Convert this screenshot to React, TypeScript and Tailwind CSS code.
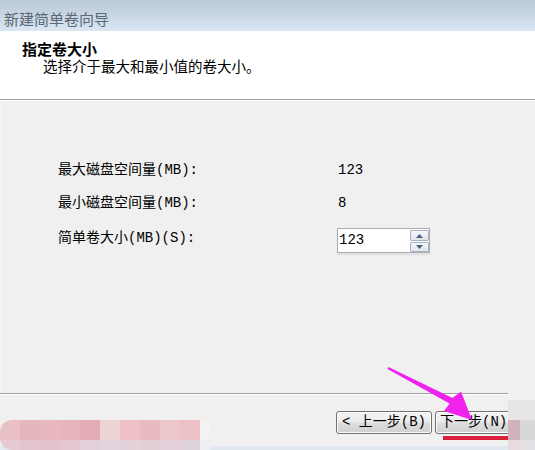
import React from "react";

const cjk = { fontFamily: "'Noto Sans CJK SC', sans-serif" };
const mono = { fontFamily: "'Liberation Mono', 'Noto Sans CJK SC', monospace" };

function Spin() {
  return (
    <div className="w-[93px] h-[25px] border border-[#abadb3] bg-white flex shadow-[0_2px_1px_#e2e2e2]">
      <div className="flex-1 flex items-center pl-[1px] text-[14px] text-black" style={mono}>
        123
      </div>
      <div className="w-[19px] flex flex-col gap-[1px] pt-[1px] pb-[0px]">
        <div className="h-[11px] border border-[#a9b2c2] rounded-[1px] bg-[linear-gradient(to_bottom,#f6f8fb,#dfe4ec)] flex items-center justify-center">
          <svg width="7" height="4" viewBox="0 0 7 4">
            <polygon points="3.5,0 7,4 0,4" fill="#4d5f80" />
          </svg>
        </div>
        <div className="h-[10px] border border-[#a9b2c2] rounded-[1px] bg-[linear-gradient(to_bottom,#f6f8fb,#dfe4ec)] flex items-center justify-center">
          <svg width="7" height="4" viewBox="0 0 7 4">
            <polygon points="0,0 7,0 3.5,4" fill="#4d5f80" />
          </svg>
        </div>
      </div>
    </div>
  );
}

const btn =
  "h-[23px] border border-[#707070] rounded-[3px] bg-[linear-gradient(to_bottom,#f3f3f3_0%,#ebebeb_48%,#dddddd_52%,#d1d1d1_100%)] shadow-[inset_0_0_0_1px_#fbfbfb] flex items-center text-[14px] text-black";

export default function App() {
  const mosaicRow1 = ["#e8c0c6", "#e6b6bd", "#e8b8be", "#e6b4bb", "#e4adb5", "#ecd4d6", "#ecc0c6", "#e8bac1", "#ecc6ca", "#ecc0c5"];
  const mosaicRow2 = ["#e6cad2", "#e4c4cc", "#e2c2cc", "#e4c6d0", "#e4d0dc", "#e2d4dc", "#e4d2da", "#e2d0d8", "#e4d0da", "#e0d4dc"];
  return (
    <div className="relative w-[535px] h-[450px] overflow-hidden bg-[#f0f0f0] flex flex-col">
      {/* title bar */}
      <div
        className="h-[31px] shrink-0 bg-[linear-gradient(to_bottom,#bccad8,#c6d3e0_40%,#dae6f3)] pl-[4px] pt-[9px] text-[15px] leading-[20px] text-[#5b6876]"
        style={cjk}
      >
        新建简单卷向导
      </div>
      {/* header */}
      <div className="h-[68px] shrink-0 bg-white pt-[9px]" style={cjk}>
        <div className="pl-[22px] text-[15px] leading-[17px] font-bold text-black">指定卷大小</div>
        <div className="pl-[43px] text-[14.5px] leading-[17px] text-black">选择介于最大和最小值的卷大小。</div>
      </div>
      <div className="h-[1px] shrink-0 bg-[#a0a0a0]" />
      <div className="h-[1px] shrink-0 bg-white" />
      {/* content */}
      <div className="h-[292px] shrink-0 ml-[1px] border-l border-[#fafafa] pl-[56px] pt-[59px] text-[14px] text-black" style={mono}>
        <div className="flex h-[20px] leading-[20px]">
          <div className="w-[280px]">最大磁盘空间量(MB):</div>
          <div>123</div>
        </div>
        <div className="flex h-[20px] leading-[20px] mt-[13px]">
          <div className="w-[280px]">最小磁盘空间量(MB):</div>
          <div>8</div>
        </div>
        <div className="flex mt-[15px] items-start">
          <div className="w-[279px] leading-[20px]">简单卷大小(MB)(S):</div>
          <Spin />
        </div>
      </div>
      <div className="h-[1px] shrink-0 bg-[#a0a0a0]" />
      <div className="h-[1px] shrink-0 bg-white" />
      {/* footer */}
      <div className="h-[51px] shrink-0 pt-[16px] pl-[336px] flex gap-[3px]" style={mono}>
        <div className={btn + " w-[96px] justify-center"}>&lt; 上一步(B)</div>
        <div className={btn + " w-[84px] pl-[4px]"}>下一步(N)</div>
      </div>
      <div className="h-[4px] shrink-0 bg-[#e2e8f0]" />

      {/* red underline annotation */}
      <div className="absolute left-[443px] top-[436px] w-[67px] h-[4px] bg-[#dc1f3a]" />

      {/* mosaic bottom-left */}
      <div className="absolute left-0 top-[420px] w-[210px] h-[30px] flex flex-col rounded-l-[12px] overflow-hidden">
        <div className="flex h-[20px]">
          {mosaicRow1.map((c, i) => (
            <div key={i} className="w-[20px] h-full" style={{ background: c }} />
          ))}
          <div className="w-[10px] h-full bg-[#f4f2f3] rounded-r-[8px]" />
        </div>
        <div className="flex h-[10px]">
          {mosaicRow2.map((c, i) => (
            <div key={i} className="w-[20px] h-full" style={{ background: c }} />
          ))}
          <div className="w-[10px] h-full bg-[#eeeef2]" />
        </div>
      </div>

      {/* mosaic right */}
      <div className="absolute left-[508px] top-[386px] w-[27px] h-[64px] flex flex-col rounded-tl-[10px] overflow-hidden">
        <div className="h-[14px] bg-[#f1f1f1]" />
        <div className="h-[20px] bg-[#e6e6e6]" />
        <div className="h-[20px] flex">
          <div className="w-[12px] bg-[#d0b2b8]" />
          <div className="flex-1 bg-[#d8d8d8]" />
        </div>
        <div className="h-[10px] flex">
          <div className="w-[12px] bg-[#e8dadf]" />
          <div className="flex-1 bg-[#e2e2e6]" />
        </div>
      </div>

      {/* magenta arrow */}
      <svg className="absolute left-0 top-0 pointer-events-none" width="535" height="450" viewBox="0 0 535 450">
        <polygon
          points="387.5,369 388.5,367 452.5,398 461,391.5 472,420 444,411 449.5,403.5"
          fill="#f022ee"
        />
      </svg>
    </div>
  );
}
